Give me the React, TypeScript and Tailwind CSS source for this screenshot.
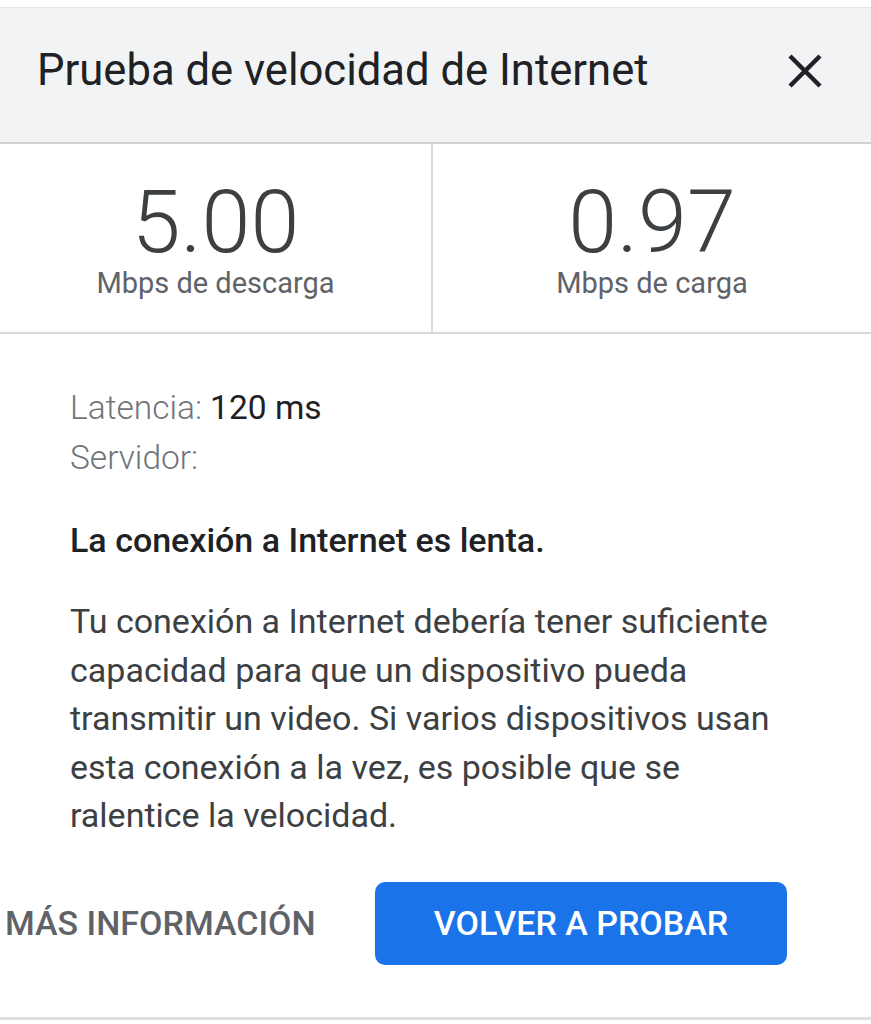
const FONT = { fontFamily: "Roboto, 'Noto Sans', sans-serif" };

function Stat({ value, label }: { value: string; label: string }) {
  return (
    <div className="flex flex-col items-center pt-[34px]">
      <span className="text-[88px] leading-[88px] font-light text-[#3c4043]">{value}</span>
      <span className="text-[29px] leading-[34px] text-[#5f6368]">{label}</span>
    </div>
  );
}

export default function App() {
  return (
    <div className="w-[871px] h-[1024px] bg-white overflow-hidden" style={FONT}>
      <div className="h-[7px]" />
      {/* Header */}
      <div className="h-[137px] bg-[#f1f3f4] border-t border-[#e3e5e6] border-b-2 border-b-[#cfd1d2] flex items-center justify-between pl-[37px] pr-[48px] pb-[8px]">
        <h1 className="text-[43.6px] text-[#202124] font-normal">Prueba de velocidad de Internet</h1>
        <svg width="36" height="36" viewBox="0 0 36 36" className="text-[#202124]">
          <path d="M3 3L33 33M33 3L3 33" stroke="currentColor" strokeWidth="4.5" />
        </svg>
      </div>

      {/* Stats */}
      <div className="grid grid-cols-[433px_1fr] h-[190px] border-b-2 border-[#d8dadb]">
        <div className="border-r-2 border-[#d8dadb]">
          <Stat value="5.00" label="Mbps de descarga" />
        </div>
        <Stat value="0.97" label="Mbps de carga" />
      </div>

      {/* Details */}
      <div className="pl-[70px] pt-[49px] w-[792px]">
        <div className="text-[33.5px] leading-[50px]">
          <div>
            <span className="font-light text-[#70757a]">Latencia: </span>
            <span className="text-[#202124]">120 ms</span>
          </div>
          <div className="font-light text-[#70757a]">Servidor:</div>
        </div>
        <p className="mt-[32px] text-[34px] leading-[51px] font-medium text-[#202124]">La conexión a Internet es lenta.</p>
        <p className="mt-[31px] text-[34px] leading-[48.5px] text-[#3c4043]">
          Tu conexión a Internet debería tener suficiente capacidad para que un dispositivo pueda transmitir un video. Si varios dispositivos usan esta conexión a la vez, es posible que se ralentice la velocidad.
        </p>
      </div>

      {/* Actions */}
      <div className="flex items-center mt-[42px] pl-[5px]">
        <button className="w-[308px] text-left text-[34px] font-medium text-[#5f6368] whitespace-nowrap">MÁS INFORMACIÓN</button>
        <button className="ml-[62px] w-[412px] h-[83px] rounded-[10px] bg-[#1a73e8] text-white text-[34px] font-medium whitespace-nowrap">
          VOLVER A PROBAR
        </button>
      </div>

      <div className="mt-[52px] h-[3px] bg-[#e0e0e0]" />
    </div>
  );
}
